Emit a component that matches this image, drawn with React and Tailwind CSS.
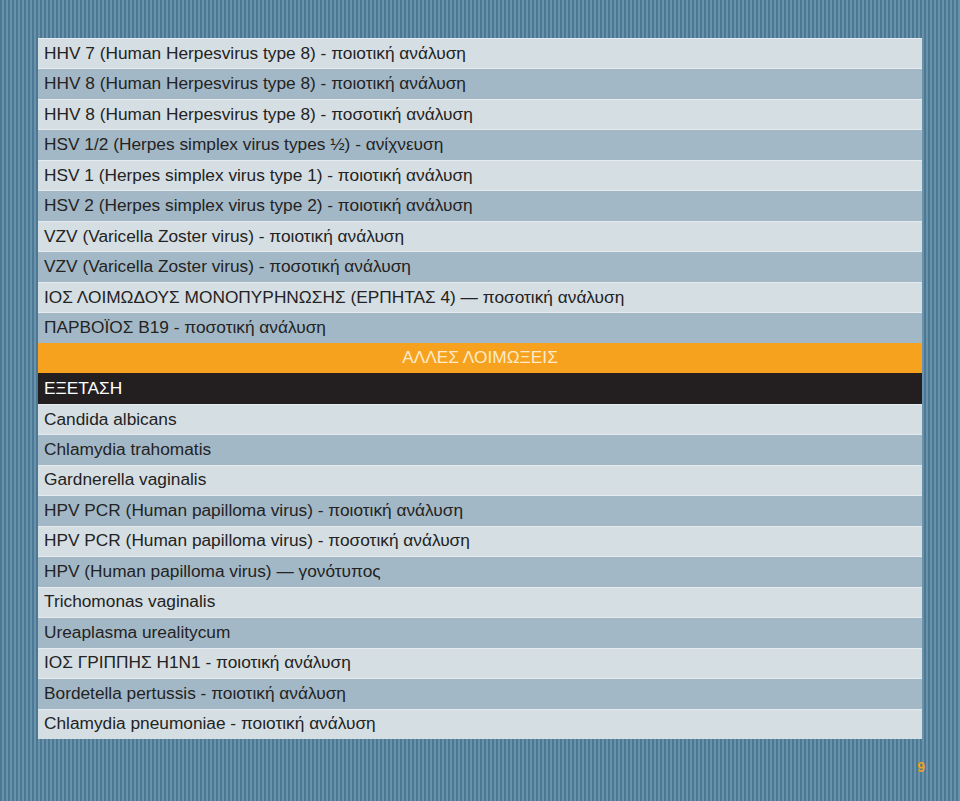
import React from 'react';

const topRows = [
  'HHV 7 (Human Herpesvirus type 8) - ποιοτική ανάλυση',
  'HHV 8 (Human Herpesvirus type 8) - ποιοτική ανάλυση',
  'HHV 8 (Human Herpesvirus type 8) - ποσοτική ανάλυση',
  'HSV 1/2 (Herpes simplex virus types ½) - ανίχνευση',
  'HSV 1 (Herpes simplex virus type 1) - ποιοτική ανάλυση',
  'HSV 2 (Herpes simplex virus type 2) - ποιοτική ανάλυση',
  'VZV (Varicella Zoster virus) - ποιοτική ανάλυση',
  'VZV (Varicella Zoster virus) - ποσοτική ανάλυση',
  'ΙΟΣ ΛΟΙΜΩΔΟΥΣ ΜΟΝΟΠΥΡΗΝΩΣΗΣ (ΕΡΠΗΤΑΣ 4) — ποσοτική ανάλυση',
  'ΠΑΡΒΟΪΟΣ Β19 - ποσοτική ανάλυση',
];

const bottomRows = [
  'Candida albicans',
  'Chlamydia trahomatis',
  'Gardnerella vaginalis',
  'HPV PCR (Human papilloma virus) - ποιοτική ανάλυση',
  'HPV PCR (Human papilloma virus) - ποσοτική ανάλυση',
  'HPV (Human papilloma virus) — γονότυπος',
  'Trichomonas vaginalis',
  'Ureaplasma urealitycum',
  'ΙΟΣ ΓΡΙΠΠΗΣ H1N1 - ποιοτική ανάλυση',
  'Bordetella pertussis - ποιοτική ανάλυση',
  'Chlamydia pneumoniae - ποιοτική ανάλυση',
];

const Row = ({ text, alt }) => (
  <div
    className={`flex items-center px-[6px] text-[17.3px] text-[#232323] border-t border-[#e4eaee] ${
      alt ? 'bg-[#a3b8c6]' : 'bg-[#d5dee2]'
    }`}
  >
    {text}
  </div>
);

export default function App() {
  return (
    <div
      className="w-[960px] h-[801px] flex flex-col bg-[repeating-linear-gradient(90deg,#4b7894_0px,#4b7894_2px,#6a92ab_2px,#6a92ab_4px)]"
      style={{ fontFamily: '"Liberation Sans", Arial, sans-serif' }}
    >
      <div className="mt-[38px] ml-[38px] w-[884px] h-[701px] grid grid-rows-23">
        {topRows.map((t, i) => (
          <Row key={t + i} text={t} alt={i % 2 === 1} />
        ))}
        <div className="flex items-center justify-center bg-[#f7a21e] text-[#fdebc9] text-[17.3px]">
          ΑΛΛΕΣ ΛΟΙΜΩΞΕΙΣ
        </div>
        <div className="flex items-center px-[6px] bg-[#231f20] text-white text-[17.3px]">
          ΕΞΕΤΑΣΗ
        </div>
        {bottomRows.map((t, i) => (
          <Row key={t + i} text={t} alt={i % 2 === 1} />
        ))}
      </div>
      <div className="flex justify-end pr-[35px] mt-[21px]">
        <span className="text-[14px] leading-none font-bold text-[#e9a11f]">9</span>
      </div>
    </div>
  );
}
